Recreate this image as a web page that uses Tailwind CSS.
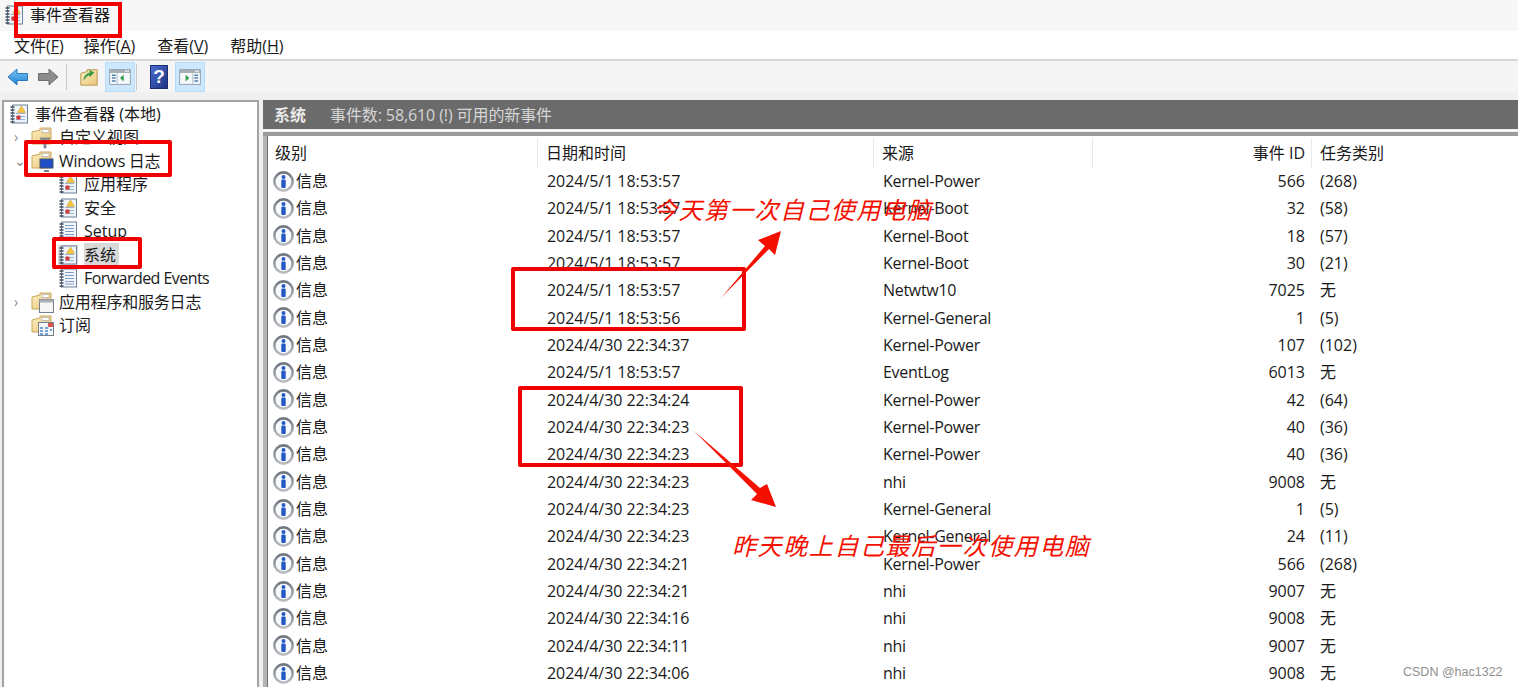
<!DOCTYPE html>
<html lang="zh-CN">
<head>
  <meta charset="UTF-8">
  <title>事件查看器</title>
  <script src="https://cdn.jsdelivr.net/npm/@tailwindcss/browser@4"></script>
</head>
<body class="relative w-[1518px] h-[687px] overflow-hidden bg-white text-[16px] text-[#1a1a1a] font-['Open_Sans','Noto_Sans_CJK_SC',sans-serif]">
  <svg class="absolute w-0 h-0">
    <defs>
      <linearGradient id="ring" x1="0" y1="0" x2="0" y2="1">
        <stop offset="0" stop-color="#6f7680"/>
        <stop offset="1" stop-color="#b9bdc2"/>
      </linearGradient>
      <linearGradient id="folderFill" x1="0" y1="0" x2="1" y2="1">
        <stop offset="0" stop-color="#fdeec2"/>
        <stop offset="1" stop-color="#e9c677"/>
      </linearGradient>
      <linearGradient id="backFill" x1="0" y1="0" x2="0" y2="1">
        <stop offset="0" stop-color="#7cc8f5"/>
        <stop offset="1" stop-color="#1c7fd0"/>
      </linearGradient>
      <linearGradient id="helpFill" x1="0" y1="0" x2="1" y2="1">
        <stop offset="0" stop-color="#4a6fd0"/>
        <stop offset="1" stop-color="#1d2f80"/>
      </linearGradient>
    </defs>
    <symbol id="info" viewBox="0 0 20 20">
      <circle cx="10" cy="10" r="8.7" fill="#f7f9fc" stroke="url(#ring)" stroke-width="2.4"/>
      <circle cx="10" cy="5.6" r="1.9" fill="#2458c4"/>
      <rect x="7.9" y="8.2" width="4.2" height="8" rx="1" fill="#2458c4"/>
    </symbol>
    <symbol id="log" viewBox="0 0 20 20">
      <rect x="3.5" y="1" width="15" height="18" fill="#eef3fa" stroke="#6f8099"/>
      <path d="M1.5 3h4M1.5 6h4M1.5 9h4M1.5 12h4M1.5 15h4M1.5 18h4" stroke="#3f4a5c" stroke-width="1.3"/>
      <path d="M7 9.5h9M7 12.5h9M7 15.5h9" stroke="#9db4d0"/>
      <path d="M12.5 2l4 6.5h-8z" fill="#f5c63c" stroke="#c99a1e" stroke-width=".5"/>
      <circle cx="9.5" cy="13.5" r="2.3" fill="#cf3f3f"/>
    </symbol>
    <symbol id="logplain" viewBox="0 0 20 20">
      <rect x="3.5" y="1" width="15" height="18" fill="#f2f6fb" stroke="#6f8099"/>
      <path d="M1.5 3h4M1.5 6h4M1.5 9h4M1.5 12h4M1.5 15h4M1.5 18h4" stroke="#3f4a5c" stroke-width="1.3"/>
      <path d="M7 4.500h9M7 7.500h9M7 10.500h9M7 13.500h9M7 16h9" stroke="#7f9cc4"/>
    </symbol>
    <symbol id="folder" viewBox="0 0 22 20">
      <path d="M1 5l8-2V1h11v16H1z" fill="url(#folderFill)" stroke="#c9a85e"/>
      <path d="M11 2.500h7v3h-7z" fill="#fff" stroke="#a9a9a9" stroke-width=".7"/>
    </symbol>
    <symbol id="pane" viewBox="0 0 30 24">
      <rect x="1" y="2" width="28" height="20" fill="#f4f8fb" stroke="#7f8a90"/>
      <rect x="1" y="2" width="28" height="4.500" fill="#a6adb3"/>
      <rect x="22" y="3" width="2" height="2" fill="#fff"/>
      <rect x="25" y="3" width="2" height="2" fill="#fff"/>
    </symbol>
  </svg>

  <!-- title bar -->
  <div class="h-[31px] bg-[#f7f7f7] flex items-center pl-[4px] gap-[6px] pb-[1px]">
    <svg class="w-[20px] h-[22px]"><use href="#log"/></svg>
    <span>事件查看器</span>
  </div>

  <!-- menu -->
  <div class="h-[30px] flex items-center pl-[14px] gap-[22px] pt-[1px] border-b-2 border-[#d6d6d6]">
    <span>文件(<u>F</u>)</span>
    <span class="-ml-[2px]">操作(<u>A</u>)</span>
    <span>查看(<u>V</u>)</span>
    <span>帮助(<u>H</u>)</span>
  </div>

  <!-- toolbar -->
  <div class="h-[31px] bg-[#f5f5f5] flex items-center pl-[7px]">
    <svg class="w-[22px] h-[20px]" viewBox="0 0 22 20"><path d="M1 10l9-8v4.500h10.500v7H10V18z" fill="url(#backFill)" stroke="#2a78bd"/></svg>
    <svg class="w-[22px] h-[20px] ml-[8px]" viewBox="0 0 22 20"><path d="M21 10l-9-8v4.500H1.500v7H12V18z" fill="#8c8c8c" stroke="#6f6f6f"/></svg>
    <div class="w-px h-[26px] bg-[#c9c9c9] ml-[7px]"></div>
    <svg class="w-[20px] h-[22px] ml-[12px]" viewBox="0 0 22 22">
      <path d="M2 7l7-2V3h11v17H2z" fill="url(#folderFill)" stroke="#b4934a"/>
      <path d="M5 15c0-5 3-8 7-9l-1-3 6 3-5 5-1-2c-2 1-4 3-6 6z" fill="#3a9a48"/>
    </svg>
    <div class="w-[30px] h-[30px] ml-[6px] bg-[#cce8ff] border border-[#b5dcfb] flex items-center justify-center">
      <svg class="w-[22px] h-[20px]" viewBox="0 0 30 24">
        <use href="#pane"/>
        <path d="M4 9.500h5M4 13.500h5M4 17.500h5" stroke="#4d7fb5" stroke-width="2"/>
        <path d="M11 7v14" stroke="#9aa5ad"/>
        <path d="M20 9v9l-5-4.500z" fill="#2f9e44"/>
      </svg>
    </div>
    <div class="w-px h-[26px] bg-[#c9c9c9] ml-[1px]"></div>
    <svg class="w-[18px] h-[24px] ml-[13px]" viewBox="0 0 18 24">
      <rect x=".5" y=".5" width="17" height="23" fill="url(#helpFill)" stroke="#1b2c70"/>
      <text x="9" y="18" text-anchor="middle" fill="#fff" font-size="19" font-weight="700" font-family="Liberation Sans">?</text>
    </svg>
    <div class="w-[30px] h-[30px] ml-[7px] bg-[#cce8ff] border border-[#b5dcfb] flex items-center justify-center">
      <svg class="w-[22px] h-[20px]" viewBox="0 0 30 24">
        <use href="#pane"/>
        <path d="M21 9.500h5M21 13.500h5M21 17.500h5" stroke="#4d7fb5" stroke-width="2"/>
        <path d="M19 7v14" stroke="#9aa5ad"/>
        <path d="M9 9v9l5-4.500z" fill="#2f9e44"/>
      </svg>
    </div>
  </div>

  <!-- main -->
  <div class="h-[595px] bg-[#f0f0f0] pt-[8px] pl-[2px] flex gap-[4px]">
    <!-- tree -->
    <div class="w-[257px] shrink-0 bg-white border-2 border-b-0 border-[#a3a3a3] overflow-hidden" id="tree"></div>

    <!-- right side -->
    <div class="flex-1 min-w-0 flex flex-col">
      <div class="h-[29px] bg-[#6b6b6b] flex items-center pl-[11px] text-[#e8e8e8] shrink-0">
        <span class="font-bold w-[56px]">系统</span>
        <span class="text-[#d6d6d6] tracking-[-0.1px]">事件数: 58,610 (!) 可用的新事件</span>
      </div>
      <div class="h-px bg-white mt-[1px]"></div>
      <div class="h-[4px] bg-[#9c9c9c] mt-px"></div>
      <div class="flex-1 flex min-h-0">
        <div class="w-[4px] bg-[#b4b4b4]"></div>
        <div class="w-px bg-[#6f6f6f]"></div>
        <div class="flex-1 bg-white pt-[1.500px] overflow-hidden">
          <div class="grid grid-cols-[270px_336px_219px_219px_1fr] h-[30px] items-center">
            <span class="pl-[7px] h-full flex items-center border-r border-[#e8e8e8]">级别</span>
            <span class="pl-[8px] h-full flex items-center border-r border-[#e8e8e8]">日期和时间</span>
            <span class="pl-[8px] h-full flex items-center border-r border-[#e8e8e8]">来源</span>
            <span class="pr-[6px] h-full flex items-center justify-end border-r border-[#e8e8e8]">事件 ID</span>
            <span class="pl-[8px]">任务类别</span>
          </div>
          <div id="rows"></div>
        </div>
      </div>
    </div>
  </div>

  <!-- annotations -->
  <div class="absolute left-[14px] top-[2px] w-[108px] h-[36px] border-[4px] border-[#f00000]"></div>
  <div class="absolute left-[24px] top-[140px] w-[148px] h-[37px] border-[4px] border-[#f00000] rounded-[2px]"></div>
  <div class="absolute left-[52px] top-[237px] w-[90px] h-[32px] border-[4px] border-[#f00000] rounded-[2px]"></div>
  <div class="absolute left-[511px] top-[267px] w-[235px] h-[64px] border-[4px] border-[#f00000] rounded-[2px]"></div>
  <div class="absolute left-[518px] top-[386px] w-[225px] h-[81px] border-[4px] border-[#f00000] rounded-[2px]"></div>
  <svg class="absolute left-0 top-0 w-[1518px] h-[687px] pointer-events-none" viewBox="0 0 1518 687">
    <polygon points="721,298 765,246 758,240 781,231 775,255 769,249" fill="#f31000"/>
    <polygon points="694,431 760,488 767,484 776,507 751,500 757,494" fill="#f31000"/>
  </svg>
  <div class="absolute left-[653px] top-[194px] text-[24px] leading-[32px] tracking-[1.4px] italic font-normal text-[#f31000] whitespace-nowrap">今天第一次自己使用电脑</div>
  <div class="absolute left-[732px] top-[530px] text-[24px] leading-[32px] tracking-[1.6px] italic font-normal text-[#f31000] whitespace-nowrap">昨天晚上自己最后一次使用电脑</div>
  <div class="absolute left-[1403px] top-[664px] text-[12.5px] leading-[16px] text-[#8f8f8f] font-['Liberation_Sans',sans-serif] whitespace-nowrap">CSDN @hac1322</div>

  <script>
    const overlays = {
      funnel: '<svg class="absolute left-[8px] top-[10px] w-[12px] h-[12px]" viewBox="0 0 12 12"><path d="M1 1h10L7 6v5H5V6z" fill="#8a96a3" stroke="#5d6772" stroke-width=".6"/></svg>',
      screen: '<svg class="absolute left-[8px] top-[7px] w-[15px] h-[15px]" viewBox="0 0 15 15"><rect x="1" y="1" width="13" height="9" fill="#1f4fc4" stroke="#46546b"/><path d="M5 12h5v2H5z" fill="#7b8694"/></svg>',
      window: '<svg class="absolute left-[8px] top-[7px] w-[15px] h-[14px]" viewBox="0 0 15 14"><rect x=".5" y=".5" width="14" height="13" fill="#f6f6f6" stroke="#77808a"/><rect x=".5" y=".5" width="14" height="3" fill="#a8afb6"/></svg>',
      table: '<svg class="absolute left-[7px] top-[7px] w-[16px] h-[14px]" viewBox="0 0 16 14"><rect x=".5" y=".5" width="15" height="13" fill="#f4f7fb" stroke="#77808a"/><rect x="10" y="1" width="5" height="4" fill="#d9534f"/><path d="M2 6h3M7 6h3M12 8h2M2 9h3M7 9h3M2 12h3M7 12h3" stroke="#4a86c8" stroke-width="1.300"/></svg>',
    };

    const treeItems = [
      { label: '事件查看器 (本地)', pad: 5, icon: 'log', w: 20 },
      { label: '自定义视图', pad: 27, icon: 'folder', w: 22, arrow: '›', overlay: 'funnel' },
      { label: 'Windows 日志', pad: 27, icon: 'folder', w: 22, arrow: '⌄', overlay: 'screen', fit: 'tracking-[-0.3px]' },
      { label: '应用程序', pad: 54, icon: 'log', w: 20 },
      { label: '安全', pad: 54, icon: 'log', w: 20 },
      { label: 'Setup', pad: 54, icon: 'logplain', w: 20 },
      { label: '系统', pad: 54, icon: 'log', w: 20, selected: true },
      { label: 'Forwarded Events', pad: 54, icon: 'logplain', w: 20, fit: 'tracking-[-0.55px]' },
      { label: '应用程序和服务日志', pad: 27, icon: 'folder', w: 22, arrow: '›', overlay: 'window', fit: 'tracking-[-0.2px]' },
      { label: '订阅', pad: 27, icon: 'folder', w: 22, overlay: 'table' },
    ];

    document.getElementById('tree').innerHTML = treeItems.map(item => `
      <div class="relative h-[23.5px] flex items-center gap-[6px] whitespace-nowrap" style="padding-left:${item.pad}px">
        ${item.arrow ? `<span class="absolute left-[10px] text-[#8a8a8a] text-[14px] leading-none">${item.arrow}</span>` : ''}
        <span class="relative shrink-0 ${item.selected ? 'bg-[#d9d9d9]' : ''} flex">
          <svg class="h-[20px]" style="width:${item.w}px"><use href="#${item.icon}"/></svg>
          ${item.overlay ? overlays[item.overlay] : ''}
        </span>
        <span class="${item.selected ? 'bg-[#d9d9d9] pr-[3px]' : ''} ${item.fit || ''}">${item.label}</span>
      </div>`).join('');

    const events = [
      ['2024/5/1 18:53:57', 'Kernel-Power', '566', '(268)'],
      ['2024/5/1 18:53:57', 'Kernel-Boot', '32', '(58)'],
      ['2024/5/1 18:53:57', 'Kernel-Boot', '18', '(57)'],
      ['2024/5/1 18:53:57', 'Kernel-Boot', '30', '(21)'],
      ['2024/5/1 18:53:57', 'Netwtw10', '7025', '无'],
      ['2024/5/1 18:53:56', 'Kernel-General', '1', '(5)'],
      ['2024/4/30 22:34:37', 'Kernel-Power', '107', '(102)'],
      ['2024/5/1 18:53:57', 'EventLog', '6013', '无'],
      ['2024/4/30 22:34:24', 'Kernel-Power', '42', '(64)'],
      ['2024/4/30 22:34:23', 'Kernel-Power', '40', '(36)'],
      ['2024/4/30 22:34:23', 'Kernel-Power', '40', '(36)'],
      ['2024/4/30 22:34:23', 'nhi', '9008', '无'],
      ['2024/4/30 22:34:23', 'Kernel-General', '1', '(5)'],
      ['2024/4/30 22:34:23', 'Kernel-General', '24', '(11)'],
      ['2024/4/30 22:34:21', 'Kernel-Power', '566', '(268)'],
      ['2024/4/30 22:34:21', 'nhi', '9007', '无'],
      ['2024/4/30 22:34:16', 'nhi', '9008', '无'],
      ['2024/4/30 22:34:11', 'nhi', '9007', '无'],
      ['2024/4/30 22:34:06', 'nhi', '9008', '无'],
    ];

    document.getElementById('rows').innerHTML = events.map(([time, source, id, task]) => `
      <div class="grid grid-cols-[270px_336px_219px_219px_1fr] h-[27.33px] items-center">
        <span class="pl-[5px] flex items-center gap-[2px]"><svg class="w-[21px] h-[21px]"><use href="#info"/></svg>信息</span>
        <span class="pl-[9px] tracking-[-0.05px]">${time}</span>
        <span class="pl-[9px] tracking-[-0.3px]">${source}</span>
        <span class="pr-[7px] text-right">${id}</span>
        <span class="pl-[8px]">${task}</span>
      </div>`).join('');
  </script>
</body>
</html>
